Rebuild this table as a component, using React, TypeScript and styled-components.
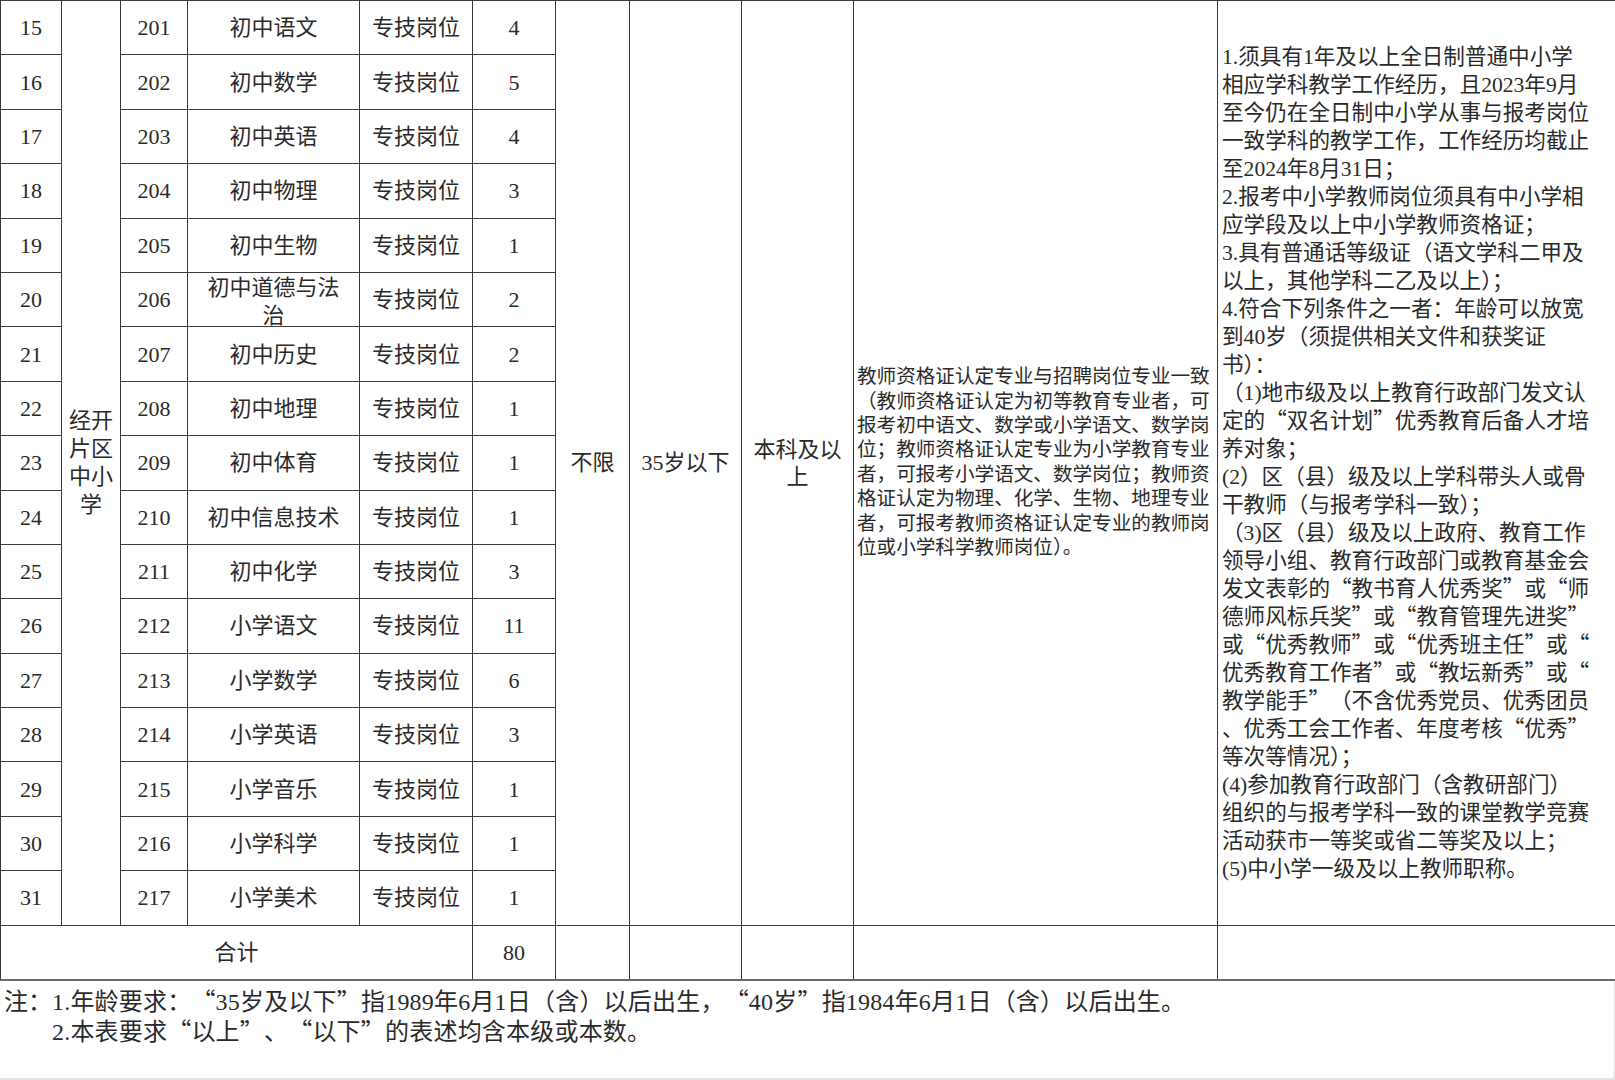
import React from "react";
import styled, { createGlobalStyle } from "styled-components";

type Post = {
    no: number
    code: number
    subject: string[]
    count: number
}

const posts: Post[] = [
    { no: 15, code: 201, subject: ["初中语文"], count: 4 },
    { no: 16, code: 202, subject: ["初中数学"], count: 5 },
    { no: 17, code: 203, subject: ["初中英语"], count: 4 },
    { no: 18, code: 204, subject: ["初中物理"], count: 3 },
    { no: 19, code: 205, subject: ["初中生物"], count: 1 },
    { no: 20, code: 206, subject: ["初中道德与法", "治"], count: 2 },
    { no: 21, code: 207, subject: ["初中历史"], count: 2 },
    { no: 22, code: 208, subject: ["初中地理"], count: 1 },
    { no: 23, code: 209, subject: ["初中体育"], count: 1 },
    { no: 24, code: 210, subject: ["初中信息技术"], count: 1 },
    { no: 25, code: 211, subject: ["初中化学"], count: 3 },
    { no: 26, code: 212, subject: ["小学语文"], count: 11 },
    { no: 27, code: 213, subject: ["小学数学"], count: 6 },
    { no: 28, code: 214, subject: ["小学英语"], count: 3 },
    { no: 29, code: 215, subject: ["小学音乐"], count: 1 },
    { no: 30, code: 216, subject: ["小学科学"], count: 1 },
    { no: 31, code: 217, subject: ["小学美术"], count: 1 },
]

const colWidths = [61, 59, 67, 172, 113, 83, 74, 112, 112, 364, 398]

const majorLines = [
    "教师资格证认定专业与招聘岗位专业一致",
    "（教师资格证认定为初等教育专业者，可",
    "报考初中语文、数学或小学语文、数学岗",
    "位；教师资格证认定专业为小学教育专业",
    "者，可报考小学语文、数学岗位；教师资",
    "格证认定为物理、化学、生物、地理专业",
    "者，可报考教师资格证认定专业的教师岗",
    "位或小学科学教师岗位）。",
]

const otherLines = [
    "1.须具有1年及以上全日制普通中小学",
    "相应学科教学工作经历，且2023年9月",
    "至今仍在全日制中小学从事与报考岗位",
    "一致学科的教学工作，工作经历均截止",
    "至2024年8月31日；",
    "2.报考中小学教师岗位须具有中小学相",
    "应学段及以上中小学教师资格证；",
    "3.具有普通话等级证（语文学科二甲及",
    "以上，其他学科二乙及以上）；",
    "4.符合下列条件之一者：年龄可以放宽",
    "到40岁（须提供相关文件和获奖证",
    "书）：",
    "（1)地市级及以上教育行政部门发文认",
    "定的“双名计划”优秀教育后备人才培",
    "养对象；",
    "(2）区（县）级及以上学科带头人或骨",
    "干教师（与报考学科一致）；",
    "（3)区（县）级及以上政府、教育工作",
    "领导小组、教育行政部门或教育基金会",
    "发文表彰的“教书育人优秀奖”或“师",
    "德师风标兵奖”或“教育管理先进奖”",
    "或“优秀教师”或“优秀班主任”或“",
    "优秀教育工作者”或“教坛新秀”或“",
    "教学能手”（不含优秀党员、优秀团员",
    "、优秀工会工作者、年度考核“优秀”",
    "等次等情况）；",
    "(4)参加教育行政部门（含教研部门）",
    "组织的与报考学科一致的课堂教学竞赛",
    "活动获市一等奖或省二等奖及以上；",
    "(5)中小学一级及以上教师职称。",
]

// curly quotes come from the CJK face so they take a full em, as in SimSun
function cjk(text: string) {
    return text.split(/([“”])/).map((part, i) =>
        part === "“" || part === "”" ? <Wide key={i}>{part}</Wide> : part
    )
}

export default function App() {
    return (
        <>
            <GlobalStyle />
            <Page lang="zh-CN">
                <Sheet>
                    <colgroup>
                        {colWidths.map((w, i) => (
                            <col key={i} style={{ width: w }} />
                        ))}
                    </colgroup>
                    <tbody>
                        {posts.map((post, index) => (
                            <Row key={post.no}>
                                <Cell>{post.no}</Cell>
                                {index === 0 && (
                                    <Cell rowSpan={posts.length} $tight>
                                        经开片区中小学
                                    </Cell>
                                )}
                                <Cell>{post.code}</Cell>
                                <Cell>
                                    {post.subject.length > 1 ? (
                                        <SubjectClip>
                                            {post.subject.map((line) => (
                                                <div key={line}>{line}</div>
                                            ))}
                                        </SubjectClip>
                                    ) : (
                                        post.subject[0]
                                    )}
                                </Cell>
                                <Cell>专技岗位</Cell>
                                <Cell>{post.count}</Cell>
                                {index === 0 && (
                                    <>
                                        <Cell rowSpan={posts.length}>不限</Cell>
                                        <Cell rowSpan={posts.length}>35岁以下</Cell>
                                        <Cell rowSpan={posts.length}>本科及以上</Cell>
                                        <TextCell rowSpan={posts.length} $size={19.6} $pad={3}>
                                            {majorLines.map((line) => (
                                                <TextLine key={line} $height={24.4}>{cjk(line)}</TextLine>
                                            ))}
                                        </TextCell>
                                        <TextCell rowSpan={posts.length} $size={21.6} $pad={4}>
                                            {otherLines.map((line) => (
                                                <TextLine key={line} $height={28}>{cjk(line)}</TextLine>
                                            ))}
                                        </TextCell>
                                    </>
                                )}
                            </Row>
                        ))}
                        <TotalRow>
                            <Cell colSpan={5}>合计</Cell>
                            <Cell>80</Cell>
                            <Cell />
                            <Cell />
                            <Cell />
                            <Cell />
                            <Cell />
                        </TotalRow>
                    </tbody>
                </Sheet>
                <NoteArea>
                    <NoteLabel>注：</NoteLabel>
                    <NoteList>
                        <NoteLine>
                            {cjk("1.年龄要求：“35岁及以下”指1989年6月1日（含）以后出生，“40岁”指1984年6月1日（含）以后出生。")}
                        </NoteLine>
                        <NoteLine>{cjk("2.本表要求“以上”、“以下”的表述均含本级或本数。")}</NoteLine>
                    </NoteList>
                </NoteArea>
            </Page>
        </>
    )
}

const GlobalStyle = createGlobalStyle`
    html, body {
        margin: 0;
        padding: 0;
        background: #ffffff;
    }

    body {
        width: 1615px;
        height: 1080px;
        overflow: hidden;
    }
`

const Page = styled.div`
    width: 1615px;
    height: 1080px;
    display: flex;
    flex-direction: column;
    font-family: "Liberation Serif", "Noto Sans CJK SC", serif;
    color: #2a2a2a;
    background: #ffffff;
`

const Wide = styled.span`
    display: inline-block;
    height: 1em;
    line-height: 1em;
    font-family: "Noto Sans CJK SC", sans-serif;
`

const Sheet = styled.table`
    width: 1615px;
    border-collapse: collapse;
    table-layout: fixed;
`

const Row = styled.tr`
    height: 54.4px;
`

const TotalRow = styled(Row)`
    td {
        border-bottom: 2px solid #6a6a6a;
    }
`

const Cell = styled.td<{ $tight?: boolean }>`
    box-sizing: border-box;
    border: 1px solid #3a3a3a;
    padding: ${({ $tight }) => ($tight ? "0 7px" : "0 5px")};
    text-align: center;
    vertical-align: middle;
    font-size: 22px;
    line-height: ${({ $tight }) => ($tight ? "27.8px" : "27px")};
    overflow: hidden;
`

const SubjectClip = styled.div`
    height: 52px;
    overflow: hidden;
    display: flex;
    flex-direction: column;
    justify-content: flex-start;
    line-height: 28px;
    white-space: nowrap;
`

const TextCell = styled.td<{ $size: number, $pad: number }>`
    box-sizing: border-box;
    border: 1px solid #3a3a3a;
    padding: 0 0 0 ${({ $pad }) => $pad}px;
    text-align: left;
    vertical-align: middle;
    font-size: ${({ $size }) => $size}px;
    overflow: hidden;
`

const TextLine = styled.div<{ $height: number }>`
    height: ${({ $height }) => $height}px;
    line-height: ${({ $height }) => $height}px;
    white-space: nowrap;
`

const NoteArea = styled.div`
    flex: 1;
    display: flex;
    align-items: flex-start;
    padding: 6px 0 0 4px;
    border-right: 1px solid #dcdcdc;
    border-bottom: 2px solid #e4e4e4;
    font-size: 24px;
    letter-spacing: 0.2px;
`

const NoteLabel = styled.span`
    flex: none;
    width: 48px;
    line-height: 30px;
    letter-spacing: 0;
`

const NoteList = styled.div`
    display: flex;
    flex-direction: column;
`

const NoteLine = styled.div`
    height: 30px;
    line-height: 30px;
    white-space: nowrap;
`
